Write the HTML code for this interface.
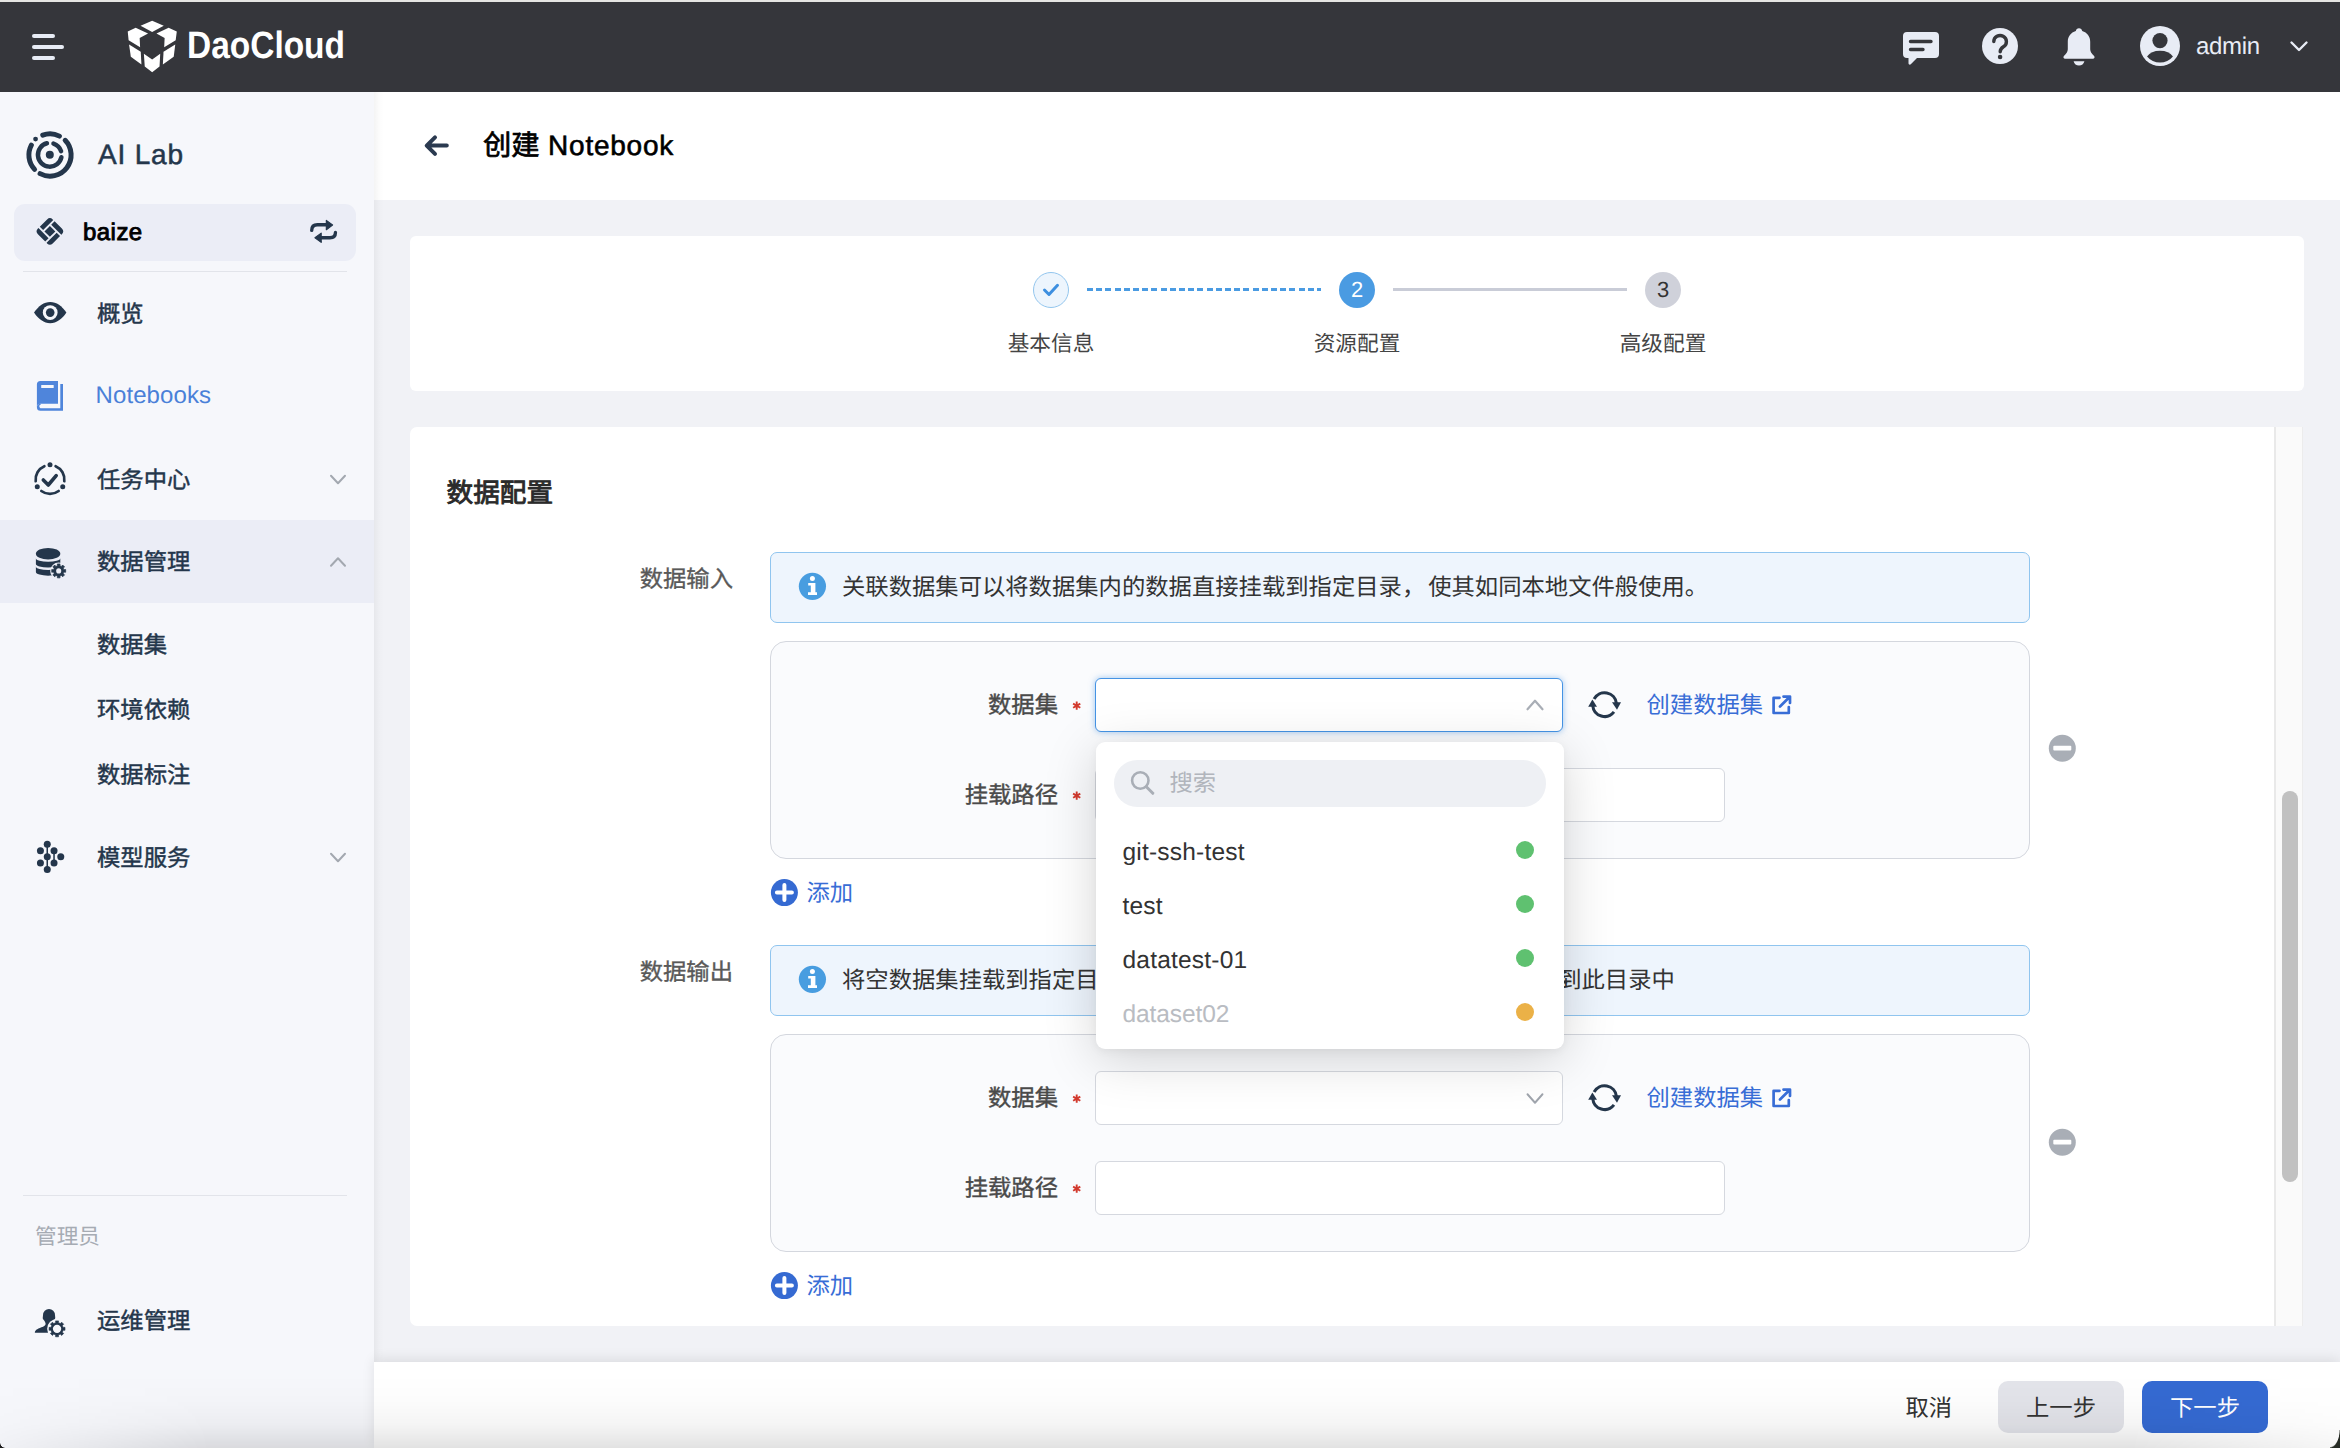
<!DOCTYPE html>
<html lang="zh-CN"><head><meta charset="utf-8"><title>创建 Notebook</title>
<style>
*{box-sizing:border-box;margin:0;padding:0}
html,body{width:2340px;height:1448px;overflow:hidden;background:#f1f2f6}
body{position:relative;font-family:"Liberation Sans",sans-serif;color:#333;text-rendering:geometricPrecision}
.a{position:absolute}
.t{position:absolute;white-space:nowrap;line-height:40px;height:40px}
svg{position:absolute;overflow:visible}
.m{color:#24364b;font-size:23.330px;-webkit-text-stroke:.45px #24364b}
.k{-webkit-text-stroke:.4px currentColor}
</style></head><body>
<div class="a" style="left:0;top:0;width:2340px;height:2px;background:#e5e5e3"></div><div class="a" style="left:0;top:2px;width:2340px;height:90px;background:#35363b"></div><div class="a" style="left:32px;top:34px;width:23px;height:4px;border-radius:2px;background:#e8ecf5"></div><div class="a" style="left:32px;top:45px;width:32px;height:4px;border-radius:2px;background:#e8ecf5"></div><div class="a" style="left:32px;top:56px;width:23px;height:4px;border-radius:2px;background:#e8ecf5"></div><svg style="left:120px;top:14px" width="70" height="64" viewBox="0 0 1584 1448" fill="#fff">
<polygon points="728,150 990,265 728,410 465,265"/>
<polygon points="175,395 355,310 635,440 445,545 455,755 195,595"/>
<polygon points="1285,395 1100,310 825,440 1010,545 1000,755 1260,595"/>
<polygon points="205,690 470,855 485,1140 245,970"/>
<polygon points="1250,690 985,855 970,1140 1215,970"/>
<polygon points="540,900 728,1030 910,900 895,1190 728,1320 560,1190"/>
</svg><svg style="left:187px;top:20px" width="160" height="50"><text x="0" y="38.3" font-family="Liberation Sans" font-weight="700" font-size="38" fill="#fff" textLength="158" lengthAdjust="spacingAndGlyphs">DaoCloud</text></svg><svg style="left:1900px;top:26px" width="44" height="44" viewBox="0 0 44 44">
<path d="M7 6h28a4 4 0 0 1 4 4v18a4 4 0 0 1 -4 4H17l-6.2 6.3c-.9 .9-2.3 .3-2.3-1V32H7a4 4 0 0 1 -4-4V10a4 4 0 0 1 4-4z" fill="#e8ecf5"/>
<path d="M10.5 15.5H31M10.5 23.5H23" stroke="#35363b" stroke-width="3.4" stroke-linecap="round"/>
</svg><svg style="left:1982px;top:28px" width="36" height="36" viewBox="0 0 36 36">
<circle cx="18" cy="18" r="18" fill="#e8ecf5"/>
<path d="M11.8 13.6a6.3 6.1 0 1 1 9.6 5.2c-2.2 1.4-3.2 2.4-3.2 5" fill="none" stroke="#35363b" stroke-width="3.4" stroke-linecap="round"/>
<circle cx="18.1" cy="29" r="2.3" fill="#35363b"/>
</svg><svg style="left:2060px;top:26px" width="38" height="42" viewBox="0 0 38 42">
<path d="M19 2.2c1.7 0 3 1.2 3.2 2.8c4.900 1.4 8 5.500 8 10.800v7.500c0 2.600 1.600 4.700 3.700 6.400c1.300 1.100 .6 3-1.100 3H5.200c-1.700 0-2.400-1.900-1.100-3c2.100-1.700 3.700-3.800 3.700-6.400v-7.500c0-5.300 3.100-9.400 8-10.800c.2-1.600 1.500-2.800 3.200-2.800z" fill="#e8ecf5"/>
<path d="M13.600 35.200h10.800c-.6 2.600-2.700 4.400-5.400 4.400s-4.800-1.800-5.400-4.400z" fill="#e8ecf5"/>
</svg><svg style="left:2140px;top:26px" width="40" height="40" viewBox="0 0 40 40">
<circle cx="20" cy="20" r="20" fill="#e8ecf5"/>
<circle cx="20" cy="14.6" r="7.600" fill="#35363b"/>
<path d="M7.04 30.38A14.5 10.3 0 0 1 32.96 30.38A16.6 16.6 0 0 1 7.04 30.38Z" fill="#35363b"/>
</svg><div class="t" style="left:2196px;top:27px;font-size:24px;color:#e8ecf5;letter-spacing:-.3px">admin</div><svg style="left:2289px;top:39px" width="20" height="14" viewBox="0 0 20 14"><path d="M2.5 3.500L10 11L17.500 3.500" fill="none" stroke="#e8ecf5" stroke-width="2.4" stroke-linecap="round" stroke-linejoin="round"/></svg><div class="a" style="left:0;top:92px;width:374px;height:1356px;background:#f6f7fb"></div><svg style="left:0;top:0" width="374" height="300"><path d="M42.78 135.17A21.10 21.10 0 0 1 59.41 136.12M65.18 140.34A21.10 21.10 0 0 1 40.09 173.63M34.57 169.39A21.10 21.10 0 0 1 31.37 145.09" fill="none" stroke="#24364b" stroke-width="5" stroke-linecap="round"/><path d="M53.46 143.53A11.85 11.85 0 0 1 61.07 151.14M61.39 157.26A11.85 11.85 0 1 1 46.93 143.30" fill="none" stroke="#24364b" stroke-width="4.5" stroke-linecap="round"/><circle cx="49.8" cy="154.8" r="4" fill="#24364b"/><circle cx="35.56" cy="139.09" r="2.4" fill="#24364b"/></svg><div class="t" style="left:98px;top:135px;font-size:28px;color:#24364b;letter-spacing:.8px;-webkit-text-stroke:.5px #24364b">AI Lab</div><div class="a" style="left:14px;top:204px;width:342px;height:57px;border-radius:11px;background:#ebedf6"></div><svg style="left:0;top:0" width="374" height="300">
<g transform="translate(49.9 231.400) rotate(45) scale(1.1)" fill="#24364b">
<rect x="-3.500" y="-3.500" width="7" height="7"/>
<path d="M-9.500 3.500V-5.900A3.600 3.600 0 0 1 -5.900 -9.500H-5.200V3.500Z"/>
<path d="M-3.500 -9.500H5.900A3.600 3.600 0 0 1 9.500 -5.900V-5.200H-3.500Z"/>
<path d="M9.500 -3.500V5.900A3.600 3.600 0 0 1 5.900 9.500H5.200V-3.500Z"/>
<path d="M3.500 9.500H-5.900A3.600 3.600 0 0 1 -9.500 5.900V5.200H3.500Z"/>
</g></svg><div class="t" style="left:83px;top:213px;font-size:24px;color:#000;letter-spacing:.45px;-webkit-text-stroke:.9px #000">baize</div><svg style="left:295px;top:205px" width="60" height="55" viewBox="0 0 1580 1448">
<path d="M440 670C440 560 500 520 590 520L830 520" fill="none" stroke="#24364b" stroke-width="88" stroke-linecap="round"/>
<polygon points="825,405 990,525 825,650" fill="#24364b" stroke="#24364b" stroke-width="30" stroke-linejoin="round"/>
<path d="M1065 725C1065 830 1000 862 920 862L690 862" fill="none" stroke="#24364b" stroke-width="88" stroke-linecap="round"/>
<polygon points="690,740 525,862 690,985" fill="#24364b" stroke="#24364b" stroke-width="30" stroke-linejoin="round"/>
</svg><div class="a" style="left:23px;top:270.500px;width:324px;height:1.300px;background:#e2e4ea"></div><div class="a" style="left:0;top:520px;width:374px;height:83px;background:#ebedf6"></div><div class="t m" style="left:97px;top:293.5px;">概览</div><div class="t" style="left:95.500px;top:376px;font-size:24px;color:#4a80d8;letter-spacing:.1px">Notebooks</div><div class="t m" style="left:97px;top:459.5px;">任务中心</div><div class="t m" style="left:97px;top:541.5px;">数据管理</div><div class="t m" style="left:97px;top:624.5px;">数据集</div><div class="t m" style="left:97px;top:689.5px;">环境依赖</div><div class="t m" style="left:97px;top:754.5px;">数据标注</div><div class="t m" style="left:97px;top:837.5px;">模型服务</div><div class="t" style="left:35px;top:1217px;font-size:21.670px;color:#a6abb3">管理员</div><div class="t m" style="left:97px;top:1300.5px;">运维管理</div><div class="a" style="left:23px;top:1194.700px;width:324px;height:1.300px;background:#e2e4ea"></div><svg style="left:0;top:0" width="10" height="10"><path d="M331.0 475.75L338 483.25L345.0 475.75" fill="none" stroke="#a3a8b0" stroke-width="2" stroke-linecap="round" stroke-linejoin="round"/></svg><svg style="left:0;top:0" width="10" height="10"><path d="M331.0 565.75L338 558.25L345.0 565.75" fill="none" stroke="#a3a8b0" stroke-width="2" stroke-linecap="round" stroke-linejoin="round"/></svg><svg style="left:0;top:0" width="10" height="10"><path d="M331.0 853.75L338 861.25L345.0 853.75" fill="none" stroke="#a3a8b0" stroke-width="2" stroke-linecap="round" stroke-linejoin="round"/></svg><svg style="left:0;top:0" width="100" height="400">
<path d="M34 312.600C38.500 306 44 302 50.200 302S62 306 66.400 312.600C62 319.300 56.500 323.300 50.200 323.300S38.500 319.300 34 312.600Z" fill="#24364b"/>
<circle cx="50.200" cy="312.600" r="7.400" fill="#f6f7fb"/><circle cx="50.200" cy="312.600" r="4.300" fill="#24364b"/>
</svg><svg style="left:0;top:0" width="100" height="420">
<path d="M40.400 381H58V403.700H40.400A3.500 3.500 0 0 0 36.900 407.200V384.500A3.500 3.500 0 0 1 40.400 381Z" fill="#4f85db"/>
<rect x="41.200" y="385" width="12.500" height="3" rx=".5" fill="#f6f7fb"/>
<path d="M60.300 384H63V410.700H40.400A3.500 3.500 0 0 1 36.900 407.200A3.500 3.500 0 0 1 40.400 403.700H41V404.400H40.400A2.200 2.200 0 0 0 40.400 408.200H60.300Z" fill="#4f85db"/>
</svg><svg style="left:0;top:0" width="100" height="520"><path d="M55.63 466.24A14.40 14.40 0 0 1 64.29 481.25M58.67 491.00A14.40 14.40 0 0 1 41.33 491.00M35.71 481.25A14.40 14.40 0 0 1 44.37 466.24" fill="none" stroke="#24364b" stroke-width="2.700" stroke-linecap="round"/><circle cx="50.00" cy="464.80" r="2.500" fill="#24364b"/><circle cx="62.73" cy="486.85" r="2.500" fill="#24364b"/><circle cx="37.27" cy="486.85" r="2.500" fill="#24364b"/><path d="M43.300 480L48.300 485L56.200 475.600" fill="none" stroke="#24364b" stroke-width="3.600" stroke-linecap="round" stroke-linejoin="round"/></svg><svg style="left:0;top:0" width="100" height="620">
<ellipse cx="48.100" cy="553.700" rx="12.200" ry="5.800" fill="#24364b"/>
<path d="M35.900 558.200A12.200 3.600 0 0 0 60.300 558.200L60.300 564.100A12.200 3.500 0 0 1 35.900 564.100Z" fill="#24364b"/>
<path d="M35.900 566.400A12.200 3.600 0 0 0 60.300 566.400L60.300 572A12.200 3.700 0 0 1 35.900 572Z" fill="#24364b"/>
<circle cx="58.700" cy="570.900" r="8.500" fill="#ebedf6"/>
<path d="M57.50 565.74L57.33 563.93L60.07 563.93L59.90 565.74L61.50 566.40L62.66 565.01L64.59 566.94L63.20 568.10L63.86 569.70L65.67 569.53L65.67 572.27L63.86 572.10L63.20 573.70L64.59 574.86L62.66 576.79L61.50 575.40L59.90 576.06L60.07 577.87L57.33 577.87L57.50 576.06L55.90 575.40L54.74 576.79L52.81 574.86L54.20 573.70L53.54 572.10L51.73 572.27L51.73 569.53L53.54 569.70L54.20 568.10L52.81 566.94L54.74 565.01L55.90 566.40Z" fill="#24364b" stroke="#24364b" stroke-width=".7" stroke-linejoin="round"/>
<circle cx="58.700" cy="570.900" r="2.550" fill="#ebedf6"/>
</svg><svg style="left:20px;top:825px" width="70" height="65" viewBox="0 0 1559 1448" fill="#24364b">
<path d="M607 430V990M758 572V848" stroke="#24364b" stroke-width="34"/>
<circle cx="607" cy="430" r="78"/><circle cx="607" cy="709" r="78"/><circle cx="607" cy="990" r="78"/>
<circle cx="455" cy="572" r="78"/><circle cx="455" cy="848" r="78"/>
<circle cx="758" cy="572" r="78"/><circle cx="758" cy="848" r="78"/>
<circle cx="908" cy="710" r="78"/>
</svg><svg style="left:20px;top:1290px" width="70" height="65" viewBox="0 0 1559 1448">
<path d="M330 950C335 880 410 855 515 818C585 790 590 745 525 665C495 632 510 605 512 560A134 138 0 1 1 780 560C780 600 800 635 762 660L720 760L680 950Z" fill="#24364b"/>
<circle cx="825" cy="865" r="220" fill="#f6f7fb"/>
<path d="M795.00 728.25L792.14 688.02L857.86 688.02L855.00 728.25L900.48 747.09L926.90 716.62L973.38 763.10L942.91 789.52L961.75 835.00L1001.98 832.14L1001.98 897.86L961.75 895.00L942.91 940.48L973.38 966.90L926.90 1013.38L900.48 982.91L855.00 1001.75L857.86 1041.98L792.14 1041.98L795.00 1001.75L749.52 982.91L723.10 1013.38L676.62 966.90L707.09 940.48L688.25 895.00L648.02 897.86L648.02 832.14L688.25 835.00L707.09 789.52L676.62 763.10L723.10 716.62L749.52 747.09Z" fill="#24364b" stroke="#24364b" stroke-width="14" stroke-linejoin="round"/>
<circle cx="825" cy="865" r="93" fill="#f6f7fb"/>
</svg><div class="a" style="left:374px;top:92px;width:1966px;height:108px;background:#fff"></div><div class="a" style="left:374px;top:92px;width:10px;height:1270px;background:linear-gradient(to right,rgba(0,0,0,.045),rgba(0,0,0,.012) 55%,rgba(0,0,0,0))"></div><svg style="left:0;top:0" width="10" height="10"><path d="M446.800 145.600H427M435 137.300L426.700 145.600L435 153.900" fill="none" stroke="#2b3a50" stroke-width="4" stroke-linecap="round" stroke-linejoin="round"/></svg><div class="t" style="left:483px;top:125px;font-size:28.300px;color:#000"><span style="-webkit-text-stroke:.7px #000">创建</span><span style="font-size:28px;letter-spacing:.75px;margin-left:8.500px;-webkit-text-stroke:.6px #000">Notebook</span></div><div class="a" style="left:410px;top:236px;width:1894px;height:155px;background:#fff;border-radius:6px"></div><div class="a" style="left:1033px;top:272px;width:36px;height:36px;border-radius:50%;background:#edf5fd;border:1.500px solid #93c6ee"></div><svg style="left:0;top:0" width="10" height="10"><path d="M1044.500 290L1049 294.500L1057.500 285.300" fill="none" stroke="#3d8fe0" stroke-width="3" stroke-linecap="round" stroke-linejoin="round"/></svg><div class="a" style="left:1087px;top:288px;width:234px;height:3px;background:repeating-linear-gradient(to right,#4a9be2 0,#4a9be2 6px,transparent 6px,transparent 9.200px)"></div><div class="a" style="left:1339px;top:272px;width:36px;height:36px;border-radius:50%;background:#4a9be2"></div><div class="t" style="left:1339px;top:270px;width:36px;text-align:center;font-size:22px;color:#fff">2</div><div class="a" style="left:1393px;top:288px;width:234px;height:3px;background:#c9ccd7"></div><div class="a" style="left:1645px;top:272px;width:36px;height:36px;border-radius:50%;background:#cfd1da"></div><div class="t" style="left:1645px;top:270px;width:36px;text-align:center;font-size:22px;color:#333">3</div><div class="t" style="left:951px;top:323.500px;width:200px;text-align:center;font-size:21.670px;color:#444">基本信息</div><div class="t" style="left:1257px;top:323.500px;width:200px;text-align:center;font-size:21.670px;color:#444">资源配置</div><div class="t" style="left:1563px;top:323.500px;width:200px;text-align:center;font-size:21.670px;color:#444">高级配置</div><div class="a" style="left:410px;top:427px;width:1893px;height:899px;background:#fff;border-radius:7px 0 0 7px"></div><div class="a" style="left:2274px;top:427px;width:29px;height:899px;background:#fafafa;border-left:2px solid #e9e9e9;border-right:1px solid #ececec"></div><div class="a" style="left:2282px;top:791px;width:16px;height:391px;border-radius:8px;background:#c1c1c1"></div><div class="t" style="left:446.500px;top:473px;font-size:26.670px;color:#2a2a2a;-webkit-text-stroke:.9px #2a2a2a">数据配置</div><div class="t" style="left:533px;top:559px;width:200px;text-align:right;font-size:23.330px;color:#595959;-webkit-text-stroke:.35px #595959">数据输入</div><div class="a" style="left:770px;top:552px;width:1260px;height:71px;background:#eef5fd;border:1.500px solid #90c5ef;border-radius:7px"></div><svg style="left:0;top:0" width="10" height="10"><circle cx="812.400" cy="586.3" r="13.600" fill="#489de0"/><circle cx="812.400" cy="578.5" r="2.500" fill="#fff"/><path d="M808.200 583.0999999999999H815.400V592.3H817V595.0999999999999H808V592.3H810.800V585.4H808.200Z" fill="#fff"/></svg><div class="t" style="left:842px;top:567px;font-size:23.330px;color:#333">关联数据集可以将数据集内的数据直接挂载到指定目录<span style="margin-right:3px">，</span>使其如同本地文件般使用。</div><div class="a" style="left:770px;top:641px;width:1260px;height:218px;background:#fafbfd;border:1.500px solid #d4d7de;border-radius:16px"></div><div class="t" style="left:858px;top:685px;width:200px;text-align:right;font-size:23.330px;color:#4a4a4a;-webkit-text-stroke:.4px #4a4a4a">数据集</div><div class="t" style="left:858px;top:775px;width:200px;text-align:right;font-size:23.330px;color:#4a4a4a;-webkit-text-stroke:.4px #4a4a4a">挂载路径</div><svg style="left:0;top:0" width="10" height="10"><path d="M1076.700 701.6V709.8000000000001M1073.100 703.6500000000001L1080.300 707.75M1080.300 703.6500000000001L1073.100 707.75" stroke="#d23a2e" stroke-width="1.900"/></svg><svg style="left:0;top:0" width="10" height="10"><path d="M1076.700 791.6V799.8000000000001M1073.100 793.6500000000001L1080.300 797.75M1080.300 793.6500000000001L1073.100 797.75" stroke="#d23a2e" stroke-width="1.900"/></svg><div class="a" style="left:1095px;top:678px;width:468px;height:54px;background:#fff;border:1.600px solid #4593e4;border-radius:6px;box-shadow:0 0 6px rgba(65,145,227,.5)"></div><svg style="left:0;top:0" width="10" height="10"><path d="M1527.5 709.25L1535 700.75L1542.5 709.25" fill="none" stroke="#a9aeb6" stroke-width="2.2" stroke-linecap="round" stroke-linejoin="round"/></svg><div class="a" style="left:1095px;top:768px;width:630px;height:54px;background:#fff;border:1.500px solid #d5d8df;border-radius:6px"></div><svg style="left:0;top:0" width="10" height="10"><path d="M1594.09 699.01A11.90 11.90 0 0 1 1616.43 703.36M1613.98 711.93A11.90 11.90 0 0 1 1592.77 705.84" fill="none" stroke="#24364b" stroke-width="3"/><polygon points="1612.0,702.2 1621.0,702.2 1617.0,709.8000000000001" fill="#24364b"/><polygon points="1588.1999999999998,706.8000000000001 1597.0,706.8000000000001 1592.3999999999999,699.4" fill="#24364b"/></svg><div class="t" style="left:1646.500px;top:685px;font-size:23.330px;color:#386dd6">创建数据集</div><svg style="left:0;top:0" width="10" height="10"><path d="M1779.500 697.8H1773.600V713H1788.800V707" fill="none" stroke="#386dd6" stroke-width="2.700" stroke-linecap="round" stroke-linejoin="round"/><path d="M1780 706.5L1789.800 696.8M1783.500 696.6H1790V703" fill="none" stroke="#386dd6" stroke-width="2.700" stroke-linecap="round" stroke-linejoin="round"/></svg><svg style="left:0;top:0" width="10" height="10"><circle cx="2062.300" cy="748.2" r="13.500" fill="#a9aeb6"/><rect x="2053.300" y="745.8000000000001" width="18" height="4.800" rx="1" fill="#fff"/></svg><svg style="left:0;top:0" width="10" height="10"><circle cx="784.400" cy="892.6" r="13.500" fill="#356ad2"/><path d="M776.900 892.6H791.900M784.400 885.1V900.1" stroke="#fff" stroke-width="4" stroke-linecap="round"/></svg><div class="t" style="left:806.500px;top:873px;font-size:23.330px;color:#386dd6">添加</div><div class="t" style="left:533px;top:952px;width:200px;text-align:right;font-size:23.330px;color:#595959;-webkit-text-stroke:.35px #595959">数据输出</div><div class="a" style="left:770px;top:945px;width:1260px;height:71px;background:#eef5fd;border:1.500px solid #90c5ef;border-radius:7px"></div><svg style="left:0;top:0" width="10" height="10"><circle cx="812.400" cy="979.3" r="13.600" fill="#489de0"/><circle cx="812.400" cy="971.5" r="2.500" fill="#fff"/><path d="M808.200 976.0999999999999H815.400V985.3H817V988.0999999999999H808V985.3H810.800V978.4H808.200Z" fill="#fff"/></svg><div class="t" style="left:842px;top:960px;font-size:23.330px;color:#333">将空数据集挂载到指定目录<span style="margin-right:3px">，</span>训练过程中产生的模型和数据会自动保存<span style="margin-left:-10px">到此目录中</span></div><div class="a" style="left:770px;top:1034px;width:1260px;height:218px;background:#fafbfd;border:1.500px solid #d4d7de;border-radius:16px"></div><div class="t" style="left:858px;top:1078px;width:200px;text-align:right;font-size:23.330px;color:#4a4a4a;-webkit-text-stroke:.4px #4a4a4a">数据集</div><div class="t" style="left:858px;top:1168px;width:200px;text-align:right;font-size:23.330px;color:#4a4a4a;-webkit-text-stroke:.4px #4a4a4a">挂载路径</div><svg style="left:0;top:0" width="10" height="10"><path d="M1076.700 1094.6000000000001V1102.8M1073.100 1096.65L1080.300 1100.75M1080.300 1096.65L1073.100 1100.75" stroke="#d23a2e" stroke-width="1.900"/></svg><svg style="left:0;top:0" width="10" height="10"><path d="M1076.700 1184.6000000000001V1192.8M1073.100 1186.65L1080.300 1190.75M1080.300 1186.65L1073.100 1190.75" stroke="#d23a2e" stroke-width="1.900"/></svg><div class="a" style="left:1095px;top:1071px;width:468px;height:54px;background:#fff;border:1.500px solid #d5d8df;border-radius:6px"></div><svg style="left:0;top:0" width="10" height="10"><path d="M1527.5 1094.25L1535 1102.75L1542.5 1094.25" fill="none" stroke="#a0a5ad" stroke-width="1.9" stroke-linecap="round" stroke-linejoin="round"/></svg><div class="a" style="left:1095px;top:1161px;width:630px;height:54px;background:#fff;border:1.500px solid #d5d8df;border-radius:6px"></div><svg style="left:0;top:0" width="10" height="10"><path d="M1594.09 1092.01A11.90 11.90 0 0 1 1616.43 1096.36M1613.98 1104.93A11.90 11.90 0 0 1 1592.77 1098.84" fill="none" stroke="#24364b" stroke-width="3"/><polygon points="1612.0,1095.1999999999998 1621.0,1095.1999999999998 1617.0,1102.8" fill="#24364b"/><polygon points="1588.1999999999998,1099.8 1597.0,1099.8 1592.3999999999999,1092.3999999999999" fill="#24364b"/></svg><div class="t" style="left:1646.500px;top:1078px;font-size:23.330px;color:#386dd6">创建数据集</div><svg style="left:0;top:0" width="10" height="10"><path d="M1779.500 1090.8H1773.600V1106H1788.800V1100" fill="none" stroke="#386dd6" stroke-width="2.700" stroke-linecap="round" stroke-linejoin="round"/><path d="M1780 1099.5L1789.800 1089.8M1783.500 1089.6H1790V1096" fill="none" stroke="#386dd6" stroke-width="2.700" stroke-linecap="round" stroke-linejoin="round"/></svg><svg style="left:0;top:0" width="10" height="10"><circle cx="2062.300" cy="1142.2" r="13.500" fill="#a9aeb6"/><rect x="2053.300" y="1139.8" width="18" height="4.800" rx="1" fill="#fff"/></svg><svg style="left:0;top:0" width="10" height="10"><circle cx="784.400" cy="1285.6" r="13.500" fill="#356ad2"/><path d="M776.900 1285.6H791.900M784.400 1278.1V1293.1" stroke="#fff" stroke-width="4" stroke-linecap="round"/></svg><div class="t" style="left:806.500px;top:1266px;font-size:23.330px;color:#386dd6">添加</div><div class="a" style="left:1096px;top:742px;width:468px;height:307px;background:#fff;border-radius:9px;box-shadow:0 10px 52px rgba(0,0,0,.17),0 2px 10px rgba(0,0,0,.05)"></div><div class="a" style="left:1114px;top:760px;width:432px;height:46.500px;border-radius:23.250px;background:#eef0f4"></div><svg style="left:0;top:0" width="10" height="10"><circle cx="1140.300" cy="780.500" r="8.200" fill="none" stroke="#a9aeb6" stroke-width="2.600"/><path d="M1146.300 786.800L1152.800 793.300" stroke="#a9aeb6" stroke-width="3" stroke-linecap="round"/></svg><div class="t" style="left:1169.500px;top:762.500px;font-size:23.330px;color:#b1b5bc">搜索</div><div class="t" style="left:1122.500px;top:833.0px;font-size:24.500px;color:#333;letter-spacing:.2px">git-ssh-test</div><div class="a" style="left:1516.400px;top:841.0px;width:18px;height:18px;border-radius:50%;background:#5fc170"></div><div class="t" style="left:1122.500px;top:886.9px;font-size:24.500px;color:#333;letter-spacing:.2px">test</div><div class="a" style="left:1516.400px;top:894.9px;width:18px;height:18px;border-radius:50%;background:#5fc170"></div><div class="t" style="left:1122.500px;top:940.8px;font-size:24.500px;color:#333;letter-spacing:.2px">datatest-01</div><div class="a" style="left:1516.400px;top:948.8px;width:18px;height:18px;border-radius:50%;background:#5fc170"></div><div class="t" style="left:1122.500px;top:994.7px;font-size:24.500px;color:#b9bcc2;letter-spacing:-.1px">dataset02</div><div class="a" style="left:1516.400px;top:1002.7px;width:18px;height:18px;border-radius:50%;background:#ebb147"></div><div class="a" style="left:374px;top:1362px;width:1966px;height:86px;background:#fff;box-shadow:0 -3px 12px rgba(0,0,0,.09)"></div><div class="t" style="left:1905.500px;top:1387.700px;font-size:23.330px;color:#333">取消</div><div class="a" style="left:1998px;top:1381px;width:126px;height:52px;border-radius:10px;background:#e3e4ea"></div><div class="t" style="left:1998px;top:1387.700px;width:126px;text-align:center;font-size:23.330px;color:#333">上一步</div><div class="a" style="left:2142px;top:1381px;width:126px;height:52px;border-radius:10px;background:#356ad2"></div><div class="t" style="left:2142px;top:1387.700px;width:126px;text-align:center;font-size:23.330px;color:#fff">下一步</div><div class="a" style="left:0;top:1375px;width:2340px;height:73px;background:linear-gradient(to bottom,rgba(0,0,0,0) 0,rgba(0,0,0,.012) 35%,rgba(0,0,0,.04) 68%,rgba(0,0,0,.115) 100%);-webkit-mask-image:linear-gradient(to right,rgba(0,0,0,.2) 0,#000 9%,#000 91%,rgba(0,0,0,.3) 100%);mask-image:linear-gradient(to right,rgba(0,0,0,.2) 0,#000 9%,#000 91%,rgba(0,0,0,.3) 100%)"></div><div class="a" style="left:2330px;top:1430px;width:10px;height:18px;background:radial-gradient(ellipse 10px 18px at 0 0,rgba(0,0,0,0) 92%,#272c25 100%)"></div><div class="a" style="left:0;top:1443px;width:5px;height:5px;background:radial-gradient(ellipse 5px 5px at 100% 0,rgba(0,0,0,0) 88%,#1c1c1c 100%)"></div></body></html>
